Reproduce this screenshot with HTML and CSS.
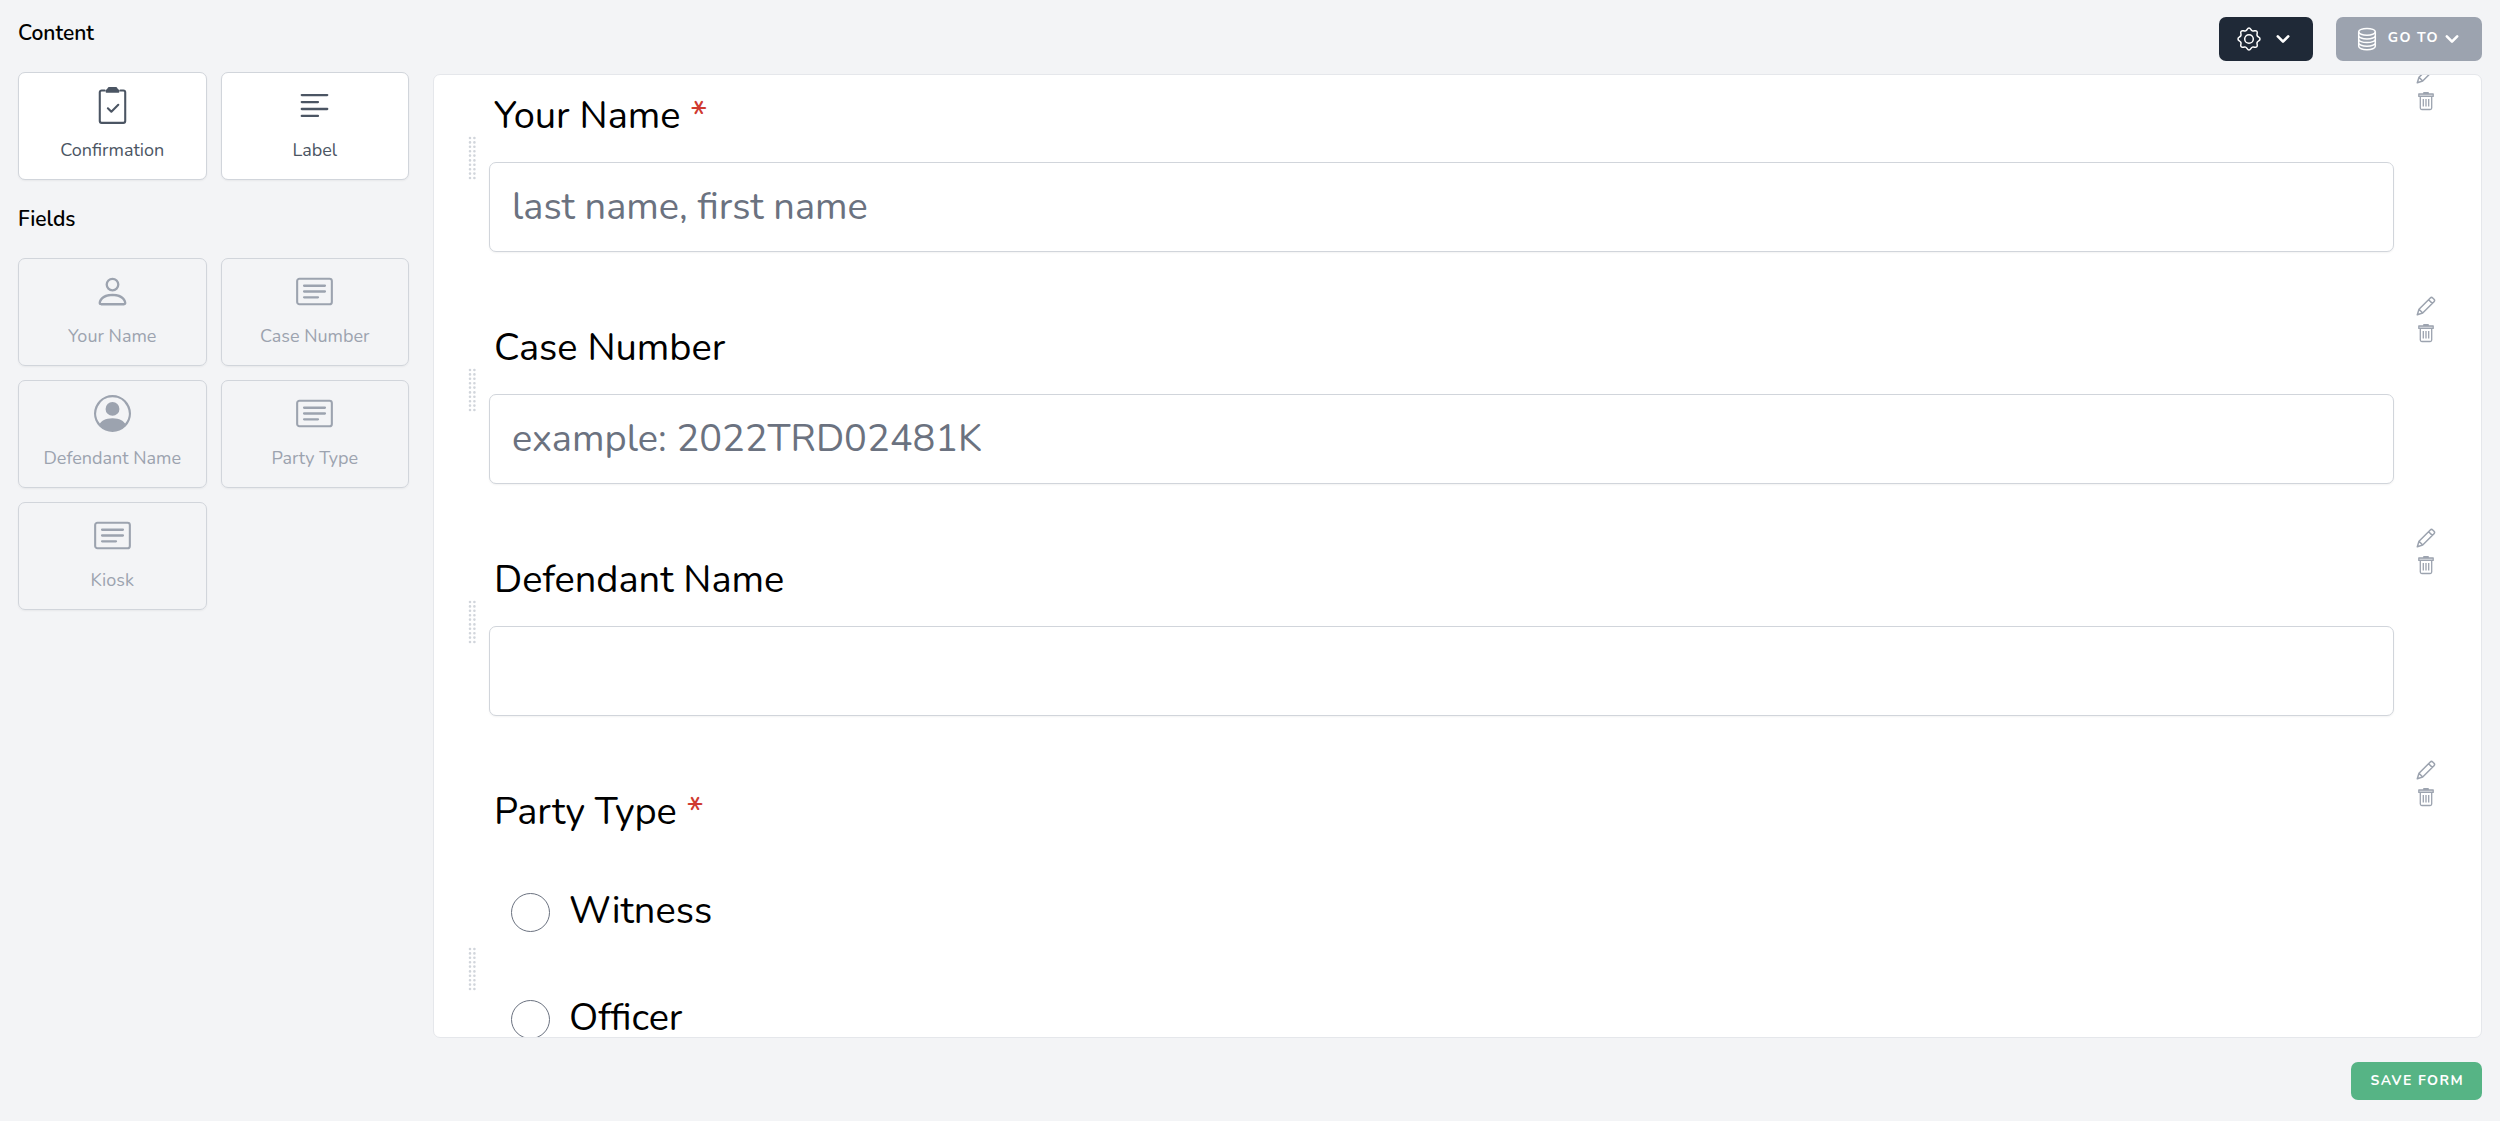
FILE: index.html
```html
<!DOCTYPE html>
<html lang="en">
<head>
<meta charset="utf-8">
<meta name="viewport" content="width=device-width, initial-scale=1">
<title>Form builder</title>
<link rel="stylesheet" href="styles.css">
</head>
<body>
<svg class="sprite" aria-hidden="true">
  <symbol id="i-clipboard" viewBox="0 0 16 16"><path d="M4.6 1.5H3.3a.8.8 0 0 0-.8.8v12.4a.8.8 0 0 0 .8.8h9.4a.8.8 0 0 0 .8-.8V2.3a.8.8 0 0 0-.8-.8h-1.3M6 9.2l1.5 1.5 3-3" fill="none" stroke="currentColor" stroke-width=".9" stroke-linecap="round" stroke-linejoin="round"/><path d="M6.5 0h3c.6 0 .6.7 1 1 .4.2.5.5.5.9 0 .4-.2.6-.6.6H5.6c-.4 0-.6-.2-.6-.6 0-.4.1-.7.5-.9.4-.3.4-1 1-1z" fill="currentColor"/></symbol>
  <symbol id="i-text" viewBox="0 0 16 16"><path d="M2.5 3.5h11M2.5 6.500h7M2.500 9.500h11M2.500 12.500h7" fill="none" stroke="currentColor" stroke-linecap="round"/></symbol>
  <symbol id="i-person" viewBox="0 0 16 16"><path fill="currentColor" d="M8 8a3 3 0 1 0 0-6 3 3 0 0 0 0 6zm2-3a2 2 0 1 1-4 0 2 2 0 0 1 4 0zm4 8c0 1-1 1-1 1H3s-1 0-1-1 1-4 6-4 6 3 6 4zm-1-.004c-.001-.246-.154-.986-.832-1.664C11.516 10.680 10.289 10 8 10c-2.290 0-3.516.680-4.168 1.332-.678.678-.830 1.418-.832 1.664h10z"/></symbol>
  <symbol id="i-circle" viewBox="0 0 16 16"><path fill="currentColor" d="M11 6a3 3 0 1 1-6 0 3 3 0 0 1 6 0z"/><path fill="currentColor" fill-rule="evenodd" d="M0 8a8 8 0 1 1 16 0A8 8 0 0 1 0 8zm8-7a7 7 0 0 0-5.468 11.370C3.242 11.226 4.805 10 8 10s4.757 1.225 5.468 2.370A7 7 0 0 0 8 1z"/></symbol>
  <symbol id="i-card" viewBox="0 0 16 16"><rect x=".5" y="2.500" width="15" height="11" rx="1" fill="none" stroke="currentColor" stroke-width=".9"/><path d="M3.500 5.500h9M3.500 8h9M3.500 10.500h6" fill="none" stroke="currentColor" stroke-linecap="round"/></symbol>
  <symbol id="i-gear" viewBox="0 0 24 24"><path d="M12 1C14 1 13.500 3.100 15.370 3.870C17.200 4.600 18.370 2.800 19.780 4.220C21.200 5.630 19.400 6.800 20.130 8.630C20.900 10.500 23 10 23 12C23 14 20.900 13.500 20.130 15.370C19.400 17.200 21.200 18.370 19.780 19.780C18.370 21.200 17.200 19.400 15.370 20.130C13.500 20.900 14 23 12 23C10 23 10.500 20.900 8.630 20.130C6.800 19.400 5.630 21.200 4.220 19.780C2.800 18.370 4.600 17.200 3.870 15.370C3.100 13.500 1 14 1 12C1 10 3.100 10.500 3.870 8.630C4.600 6.800 2.800 5.630 4.220 4.220C5.630 2.800 6.800 4.600 8.630 3.870C10.500 3.100 10 1 12 1Z" fill="none" stroke="currentColor" stroke-width="1.500"/><circle cx="12" cy="12" r="4.300" fill="none" stroke="currentColor" stroke-width="1.500"/></symbol>
  <symbol id="i-db" viewBox="0 0 24 24"><path d="M3.700 4.800v14.500c0 1.900 3.700 3.400 8.300 3.400s8.300-1.500 8.300-3.400V4.800M3.700 8.600c0 1.900 3.700 3.400 8.300 3.400s8.300-1.500 8.300-3.400M3.700 12.200c0 1.900 3.700 3.400 8.300 3.400s8.300-1.500 8.300-3.400M3.700 15.800c0 1.900 3.700 3.400 8.300 3.400s8.300-1.500 8.300-3.400" fill="none" stroke="currentColor" stroke-width="1.500"/><ellipse cx="12" cy="4.800" rx="8.300" ry="3.400" fill="none" stroke="currentColor" stroke-width="1.500"/></symbol>
  <symbol id="i-chevron" viewBox="0 0 20 20"><path fill="currentColor" fill-rule="evenodd" d="M5.293 7.293a1 1 0 0 1 1.414 0L10 10.586l3.293-3.293a1 1 0 1 1 1.414 1.414l-4 4a1 1 0 0 1-1.414 0l-4-4a1 1 0 0 1 0-1.414z"/></symbol>
  <symbol id="i-pencil" viewBox="0 0 20 20"><path d="M1.300 18.700l1.700-5.400L14.300 2a1.700 1.700 0 0 1 2.400 0l1.300 1.300a1.700 1.700 0 0 1 0 2.400L6.700 17zM3 13.300L6.700 17M12.600 3.700l3.700 3.700" fill="none" stroke="currentColor" stroke-width="1.500" stroke-linejoin="round"/></symbol>
  <symbol id="i-trash" viewBox="0 0 20 20"><path d="M2.800 3h14.400v2.400H2.800z" fill="currentColor" fill-opacity=".35"/><path d="M2.800 3h14.400v2.400H2.800zM7.800 3V1.600h4.400V3M4.300 5.400v11.600c0 1 .7 1.500 1.500 1.500h8.400c.8 0 1.500-.5 1.500-1.500V5.400M7.300 8v7.500M10 8v7.500M12.700 8v7.500" fill="none" stroke="currentColor" stroke-width="1.300" stroke-linejoin="round"/></symbol>
  <symbol id="i-grip" viewBox="0 0 8 44"><path d="M2 2v18.100M6.400 2v18.100M2 24.400v18M6.400 24.400v18" fill="none" stroke="currentColor" stroke-width="2.600" stroke-linecap="round" stroke-dasharray="0 4.400"/></symbol>
</svg>
<div class="page">
  <aside class="sidebar">
    <h2 class="heading">Content</h2>
    <div class="tiles">
      <button class="tile" type="button"><svg class="tile-icon"><use href="#i-clipboard"/></svg>Confirmation</button>
      <button class="tile" type="button"><svg class="tile-icon"><use href="#i-text"/></svg>Label</button>
    </div>
    <h2 class="heading">Fields</h2>
    <div class="tiles">
      <button class="tile" type="button" disabled><svg class="tile-icon"><use href="#i-person"/></svg>Your Name</button>
      <button class="tile" type="button" disabled><svg class="tile-icon"><use href="#i-card"/></svg>Case Number</button>
      <button class="tile" type="button" disabled><svg class="tile-icon"><use href="#i-circle"/></svg>Defendant Name</button>
      <button class="tile" type="button" disabled><svg class="tile-icon"><use href="#i-card"/></svg>Party Type</button>
      <button class="tile" type="button" disabled><svg class="tile-icon"><use href="#i-card"/></svg>Kiosk</button>
    </div>
  </aside>
  <main class="main">
    <header class="toolbar">
      <button class="btn btn-dark" type="button"><svg class="btn-icon"><use href="#i-gear"/></svg><svg class="chevron"><use href="#i-chevron"/></svg></button>
      <button class="btn btn-muted" type="button"><svg class="btn-icon"><use href="#i-db"/></svg><span>GO TO</span><svg class="chevron"><use href="#i-chevron"/></svg></button>
    </header>
    <form class="panel" id="builder">
      <div class="items">
        <section class="item">
          <svg class="grip"><use href="#i-grip"/></svg>
          <div class="field">
            <label class="label" for="your-name">Your Name <span class="required">*</span></label>
            <input class="input" id="your-name" type="text" placeholder="last name, first name">
          </div>
          <div class="actions">
            <button class="action" type="button"><svg><use href="#i-pencil"/></svg></button>
            <button class="action" type="button"><svg><use href="#i-trash"/></svg></button>
          </div>
        </section>
        <section class="item">
          <svg class="grip"><use href="#i-grip"/></svg>
          <div class="field">
            <label class="label" for="case-number">Case Number</label>
            <input class="input" id="case-number" type="text" placeholder="example: 2022TRD02481K">
          </div>
          <div class="actions">
            <button class="action" type="button"><svg><use href="#i-pencil"/></svg></button>
            <button class="action" type="button"><svg><use href="#i-trash"/></svg></button>
          </div>
        </section>
        <section class="item">
          <svg class="grip"><use href="#i-grip"/></svg>
          <div class="field">
            <label class="label" for="defendant-name">Defendant Name</label>
            <input class="input" id="defendant-name" type="text">
          </div>
          <div class="actions">
            <button class="action" type="button"><svg><use href="#i-pencil"/></svg></button>
            <button class="action" type="button"><svg><use href="#i-trash"/></svg></button>
          </div>
        </section>
        <section class="item item-options">
          <svg class="grip"><use href="#i-grip"/></svg>
          <fieldset class="field">
            <legend class="label">Party Type <span class="required">*</span></legend>
            <label class="option"><input class="radio" type="radio" name="party-type"><span>Witness</span></label>
            <label class="option"><input class="radio" type="radio" name="party-type"><span>Officer</span></label>
          </fieldset>
          <div class="actions">
            <button class="action" type="button"><svg><use href="#i-pencil"/></svg></button>
            <button class="action" type="button"><svg><use href="#i-trash"/></svg></button>
          </div>
        </section>
      </div>
    </form>
    <footer class="footer">
      <button class="btn btn-save" type="submit" form="builder">SAVE FORM</button>
    </footer>
  </main>
</div>
</body>
</html>
```
FILE: styles.css
```css
*, *::before, *::after { box-sizing: border-box; }

body {
  margin: 0;
  background: #f3f4f6;
  color: #000;
  font-family: Nunito, Lato, "Open Sans", sans-serif;
}

button, input { font: inherit; }
button { margin: 0; border: 0; cursor: pointer; }

.sprite { display: none; }

.page {
  display: flex;
  gap: 24px;
  height: 100vh;
  padding: 17px 18px 21px;
}

/* Palette of blocks that can be added to the form */
.sidebar { flex: 0 0 391px; }

.heading {
  margin: 0;
  padding-bottom: 23px;
  font-size: 21px;
  font-weight: 600;
  line-height: 32px;
}

.tiles {
  display: grid;
  grid-template-columns: 1fr 1fr;
  gap: 14px;
  padding-bottom: 23px;
}

.tile {
  display: flex;
  flex-direction: column;
  align-items: center;
  gap: 12px;
  height: 108px;
  padding: 14px 0;
  border: 1px solid #d1d5db;
  border-radius: 7px;
  background: #fff;
  box-shadow: 0 1px 2px rgba(0, 0, 0, .05);
  color: #4b5563;
  font-size: 18px;
  line-height: 28px;
}

.tile:disabled {
  background: transparent;
  color: #9ca3af;
  cursor: default;
}

.tile-icon { flex: none; width: 37px; height: 37px; }

.main {
  display: flex;
  flex: 1;
  flex-direction: column;
  min-width: 0;
}

.toolbar {
  display: flex;
  justify-content: flex-end;
  gap: 23px;
  padding-bottom: 13px;
}

.btn {
  display: flex;
  align-items: center;
  height: 44px;
  border-radius: 7px;
  color: #fff;
  font-size: 14px;
  font-weight: 700;
  line-height: 20px;
  letter-spacing: .1em;
}

.btn-dark { gap: 9px; padding: 0 17px 0 18px; background: #1f2937; }
.btn-muted { padding: 0 17px 0 19px; background: #9ca3af; }
.btn-muted span { padding: 0 0 2px 9px; }
.btn-save { height: 38px; padding: 0 18px 1px 19px; background: #56b485; }

.btn-icon { width: 24px; height: 24px; }
.chevron { width: 26px; height: 26px; }

/* Form preview, scrolled slightly past its first field */
.panel {
  flex: 1;
  min-height: 0;
  overflow: hidden;
  border: 1px solid #e5e7eb;
  border-radius: 7px;
  background: #fff;
}

.items {
  display: flex;
  flex-direction: column;
  gap: 28px;
  margin-top: -19px;
  padding: 0 45px 0 34px;
}

.item {
  display: flex;
  min-height: 204px;
}

.item-options { min-height: 434px; }

.grip {
  flex: none;
  align-self: center;
  width: 8px;
  height: 44px;
  color: #d1d5db;
}

.field {
  flex: 1;
  min-width: 0;
  margin: 0 22px 0 13px;
  padding: 0;
  border: 0;
}

.label {
  display: block;
  padding: 32px 0 18px 5px;
  font-size: 38px;
  line-height: 56px;
}

.required { color: #d03a30; }

.input {
  display: block;
  width: 100%;
  height: 90px;
  padding: 0 22px 2px;
  border: 1px solid #d1d5db;
  border-radius: 7px;
  background: #fff;
  box-shadow: 0 1px 2px rgba(0, 0, 0, .05);
  font-size: 38px;
}

.input::placeholder { color: #6b7280; opacity: 1; }

.option {
  display: flex;
  align-items: center;
  gap: 19px;
  height: 107px;
  padding: 2px 0 0 22px;
  font-size: 38px;
}

.option span { padding-bottom: 4px; }

.radio {
  width: 39px;
  height: 39px;
  margin: 0;
  border: 1px solid #6b7280;
  border-radius: 50%;
  background: #fff;
  appearance: none;
}

.actions {
  display: flex;
  flex-direction: column;
  gap: 7px;
  padding-top: 8px;
}

.action {
  width: 20px;
  height: 20px;
  padding: 0;
  background: none;
  color: #9ca3af;
}

.action svg { display: block; width: 20px; height: 20px; }

.footer {
  display: flex;
  justify-content: flex-end;
  padding-top: 24px;
}
```
